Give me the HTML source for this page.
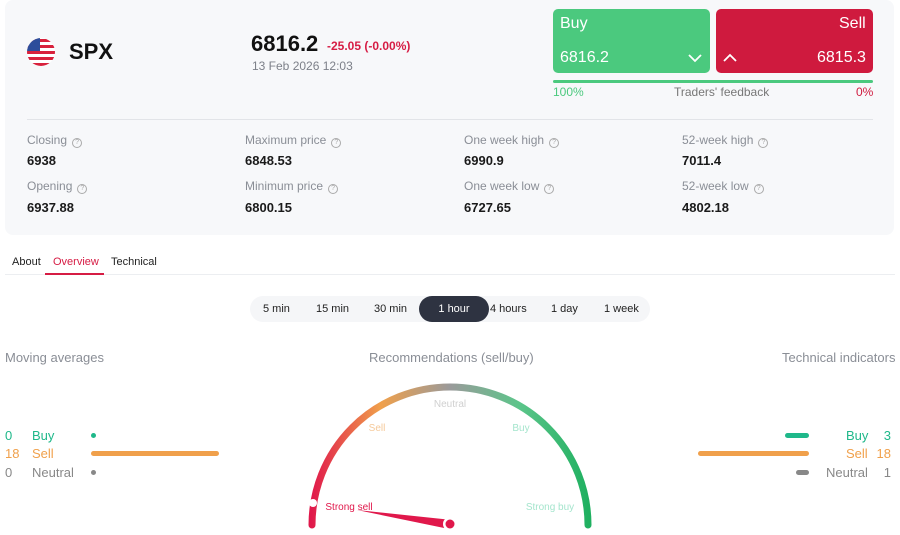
<!DOCTYPE html>
<html><head><style>
*{margin:0;padding:0;box-sizing:border-box}
body{width:900px;height:535px;overflow:hidden;background:#fff;font-family:"Liberation Sans",sans-serif;position:relative}
.a{position:absolute;white-space:nowrap}
.panel{position:absolute;left:5px;top:0;width:889px;height:235px;background:#f7f8fa;border-radius:8px}
.lbl{font-size:12px;color:#8a8e96}
.val{font-size:13px;font-weight:bold;color:#1a1a1a}
.q{display:inline-block;width:10px;height:10px;border:1px solid #aaa;border-radius:50%;font-size:7px;line-height:8px;text-align:center;color:#aaa;margin-left:5px;vertical-align:0px}
.seg{font-size:11px;color:#222}
</style></head><body>
<div class="panel"></div>
<svg class="a" style="left:26px;top:37px" width="30" height="30" viewBox="0 0 30 30">
<defs><clipPath id="c"><circle cx="15" cy="15" r="14"/></clipPath></defs>
<g clip-path="url(#c)"><rect width="30" height="30" fill="#fff"/>
<rect y="2" width="30" height="3" fill="#d8213c"/><rect y="8" width="30" height="3" fill="#d8213c"/><rect y="14" width="30" height="3" fill="#d8213c"/><rect y="20" width="30" height="3" fill="#d8213c"/><rect y="26" width="30" height="3" fill="#d8213c"/>
<rect width="14" height="14" fill="#2d4d9b"/></g></svg>
<div class="a" style="left:69px;top:39px;font-size:22px;font-weight:bold;color:#111">SPX</div>
<div class="a" style="left:251px;top:31px;font-size:22px;font-weight:bold;color:#111">6816.2</div>
<div class="a" style="left:327px;top:39px;font-size:12px;font-weight:bold;color:#d61c44">-25.05 (-0.00%)</div>
<div class="a" style="left:252px;top:59px;font-size:12px;color:#7d8089">13 Feb 2026 12:03</div>

<div class="a" style="left:553px;top:9px;width:157px;height:64px;background:#4bc97e;border-radius:5px"></div>
<div class="a" style="left:560px;top:15px;font-size:16px;color:#fff">Buy</div>
<div class="a" style="left:560px;top:49px;font-size:16px;color:#fff">6816.2</div>
<svg class="a" style="left:688px;top:53px" width="14" height="10"><path d="M1 2 L7 8 L13 2" stroke="#fff" stroke-width="1.8" fill="none"/></svg>
<div class="a" style="left:716px;top:9px;width:157px;height:64px;background:#cf1a3e;border-radius:5px"></div>
<div class="a" style="left:839px;top:15px;font-size:16px;color:#fff">Sell</div>
<div class="a" style="left:817px;top:49px;font-size:16px;color:#fff">6815.3</div>
<svg class="a" style="left:723px;top:53px" width="14" height="10"><path d="M1 8 L7 2 L13 8" stroke="#fff" stroke-width="1.8" fill="none"/></svg>
<div class="a" style="left:553px;top:80px;width:320px;height:3px;background:#4bc97e;border-radius:2px"></div>
<div class="a" style="left:553px;top:85px;font-size:12px;color:#4bc97e">100%</div>
<div class="a" style="left:674px;top:85px;font-size:12px;color:#777">Traders' feedback</div>
<div class="a" style="left:856px;top:85px;font-size:12px;color:#cf1a3e">0%</div>
<div class="a" style="left:27px;top:119px;width:846px;height:1px;background:#e2e4e8"></div>

<div class="a lbl" style="left:27px;top:133px">Closing<span class="q">?</span></div>
<div class="a val" style="left:27px;top:153px">6938</div>
<div class="a lbl" style="left:27px;top:179px">Opening<span class="q">?</span></div>
<div class="a val" style="left:27px;top:200px">6937.88</div>
<div class="a lbl" style="left:245px;top:133px">Maximum price<span class="q">?</span></div>
<div class="a val" style="left:245px;top:153px">6848.53</div>
<div class="a lbl" style="left:245px;top:179px">Minimum price<span class="q">?</span></div>
<div class="a val" style="left:245px;top:200px">6800.15</div>
<div class="a lbl" style="left:464px;top:133px">One week high<span class="q">?</span></div>
<div class="a val" style="left:464px;top:153px">6990.9</div>
<div class="a lbl" style="left:464px;top:179px">One week low<span class="q">?</span></div>
<div class="a val" style="left:464px;top:200px">6727.65</div>
<div class="a lbl" style="left:682px;top:133px">52-week high<span class="q">?</span></div>
<div class="a val" style="left:682px;top:153px">7011.4</div>
<div class="a lbl" style="left:682px;top:179px">52-week low<span class="q">?</span></div>
<div class="a val" style="left:682px;top:200px">4802.18</div>

<div class="a" style="left:12px;top:256px;font-size:11px;color:#222">About</div>
<div class="a" style="left:53px;top:256px;font-size:11px;color:#d61c44">Overview</div>
<div class="a" style="left:111px;top:256px;font-size:11px;color:#222">Technical</div>
<div class="a" style="left:5px;top:274px;width:890px;height:1px;background:#eceef1"></div>
<div class="a" style="left:45px;top:273px;width:59px;height:2px;background:#d61c44"></div>

<div class="a" style="left:250px;top:296px;width:400px;height:26px;background:#f5f6f8;border-radius:13px"></div>
<div class="a" style="left:419px;top:296px;width:70px;height:26px;background:#2e3341;border-radius:13px"></div>
<div class="a seg" style="left:263px;top:303px">5 min</div>
<div class="a seg" style="left:316px;top:303px">15 min</div>
<div class="a seg" style="left:374px;top:303px">30 min</div>
<div class="a seg" style="left:419px;width:70px;text-align:center;top:303px;color:#fff">1 hour</div>
<div class="a seg" style="left:490px;top:303px">4 hours</div>
<div class="a seg" style="left:551px;top:303px">1 day</div>
<div class="a seg" style="left:604px;top:303px">1 week</div>

<div class="a" style="left:5px;top:350px;font-size:13px;color:#8a8e96">Moving averages</div>
<div class="a" style="left:369px;top:350px;font-size:13px;color:#8a8e96">Recommendations (sell/buy)</div>
<div class="a" style="left:782px;top:350px;font-size:13px;color:#8a8e96">Technical indicators</div>

<div class="a" style="left:5px;top:428px;font-size:13px;color:#1fb88a">0</div>
<div class="a" style="left:32px;top:428px;font-size:13px;color:#1fb88a">Buy</div>
<div class="a" style="left:91px;top:433px;width:5px;height:5px;border-radius:50%;background:#1fb88a"></div>
<div class="a" style="left:5px;top:446px;font-size:13px;color:#f0a04b">18</div>
<div class="a" style="left:32px;top:446px;font-size:13px;color:#f0a04b">Sell</div>
<div class="a" style="left:91px;top:451px;width:128px;height:5px;border-radius:3px;background:#f0a04b"></div>
<div class="a" style="left:5px;top:465px;font-size:13px;color:#888">0</div>
<div class="a" style="left:32px;top:465px;font-size:13px;color:#888">Neutral</div>
<div class="a" style="left:91px;top:470px;width:5px;height:5px;border-radius:50%;background:#888"></div>

<div class="a" style="left:785px;top:433px;width:24px;height:5px;border-radius:3px;background:#1fb88a"></div>
<div class="a" style="left:846px;top:428px;font-size:13px;color:#1fb88a">Buy</div>
<div class="a" style="left:870px;top:428px;width:21px;text-align:right;font-size:13px;color:#1fb88a">3</div>
<div class="a" style="left:698px;top:451px;width:111px;height:5px;border-radius:3px;background:#f0a04b"></div>
<div class="a" style="left:846px;top:446px;font-size:13px;color:#f0a04b">Sell</div>
<div class="a" style="left:870px;top:446px;width:21px;text-align:right;font-size:13px;color:#f0a04b">18</div>
<div class="a" style="left:796px;top:470px;width:13px;height:5px;border-radius:3px;background:#888"></div>
<div class="a" style="left:826px;top:465px;font-size:13px;color:#888">Neutral</div>
<div class="a" style="left:870px;top:465px;width:21px;text-align:right;font-size:13px;color:#888">1</div>

<svg class="a" style="left:0;top:0" width="900" height="535">
<defs><linearGradient id="g" x1="311" y1="0" x2="589" y2="0" gradientUnits="userSpaceOnUse">
<stop offset="0" stop-color="#e0184b"/><stop offset="0.25" stop-color="#f0a04b"/><stop offset="0.5" stop-color="#9a9a9a"/><stop offset="0.75" stop-color="#5cc58a"/><stop offset="1" stop-color="#1fb060"/></linearGradient></defs>
<path d="M312 525 A138 138 0 0 1 588 525" stroke="url(#g)" stroke-width="7" fill="none" stroke-linecap="round"/>
<text x="450" y="407" font-size="10" fill="#d0d0d0" text-anchor="middle" font-family="Liberation Sans">Neutral</text>
<text x="377" y="431" font-size="10" fill="#f5c99a" text-anchor="middle" font-family="Liberation Sans">Sell</text>
<text x="521" y="431" font-size="10" fill="#a5e5cd" text-anchor="middle" font-family="Liberation Sans">Buy</text>
<text x="349" y="510" font-size="10" fill="#e0184b" text-anchor="middle" font-family="Liberation Sans">Strong sell</text>
<text x="550" y="510" font-size="10" fill="#a5e5cd" text-anchor="middle" font-family="Liberation Sans">Strong buy</text>
<circle cx="313" cy="503" r="4" fill="#fff"/>
<path d="M357 510 L452 520 L449 529 Z" fill="#e0184b"/>
<circle cx="450" cy="524" r="7" fill="#fff"/>
<circle cx="450" cy="524" r="4.5" fill="#e0184b"/>
</svg>
</body></html>
